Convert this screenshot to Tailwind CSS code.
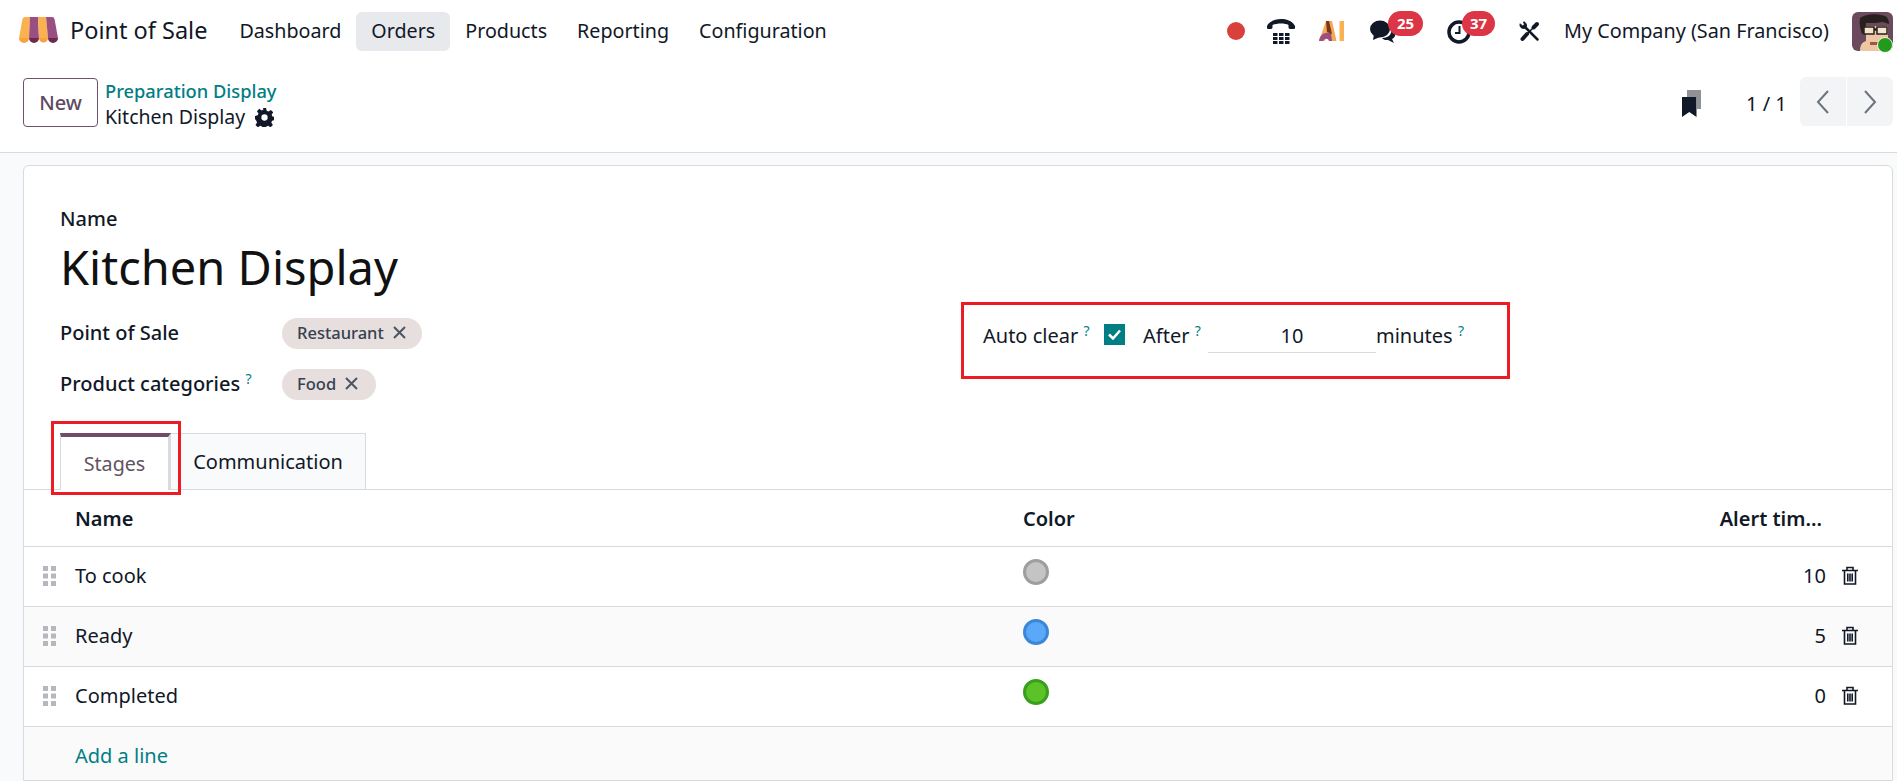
<!doctype html>
<html lang="en">
  <head>
    <meta charset="UTF-8" />
    <title>Point of Sale</title>
    <script src="https://cdn.jsdelivr.net/npm/@tailwindcss/browser@4"></script>
  </head>
  <body class="w-[1897px] h-[781px] overflow-hidden bg-[#f9fafb] text-[#111827] text-[20px] font-['Noto_Sans',sans-serif]">
    <!-- Top navbar -->
    <nav class="h-[62px] bg-white flex items-center">
      <svg class="ml-[19px] w-[39px] h-[26px] shrink-0 -mt-[2px]" viewBox="0 0 39 26">
        <path d="M3.500 2Q4 0 6 0H11L10 21H0z" fill="#fbb150"/>
        <path d="M11 0H19L20 21H10z" fill="#9a4f83"/>
        <path d="M19 0H27L29 21H20z" fill="#fbb150"/>
        <path d="M27 0H33Q35 0 35.500 2L39 21H29z" fill="#9a4f83"/>
        <path d="M0 21a5 5 0 0 0 10 0zM20 21a4.500 4.500 0 0 0 9 0z" fill="#f6a23f"/>
        <path d="M10 21a5 5 0 0 0 10 0zM29 21a5 5 0 0 0 10 0z" fill="#6d2a4c"/>
      </svg>
      <span class="ml-[12px] text-[23.500px] leading-none">Point of Sale</span>
      <div class="ml-[17px] flex items-center text-[19.700px]">
        <a class="h-[39px] px-[15px] flex items-center">Dashboard</a>
        <a class="h-[39px] px-[15px] flex items-center rounded-md bg-[#e7e9ed]">Orders</a>
        <a class="h-[39px] px-[15px] flex items-center">Products</a>
        <a class="h-[39px] px-[15px] flex items-center">Reporting</a>
        <a class="h-[39px] px-[15px] flex items-center">Configuration</a>
      </div>
      <div class="ml-auto flex items-center">
        <span class="w-[18px] h-[18px] rounded-full bg-[#d9403b]"></span>
        <!-- phone -->
        <svg class="ml-[22px] w-[28px] h-[25px]" viewBox="0 0 28 25" fill="#111827">
          <path d="M0 7C3 1.500 9 0 14 0s11 1.500 14 7c.5 1.500 0 3-1 3h-4c-1 0-1.500-.8-1.500-2V6C20 5 17 4.500 14 4.500S8 5 5.500 6V8c0 1.200-.5 2-1.500 2H1C0 10-.5 8.500 0 7z"/>
          <path d="M6 14h4.500v3H6zM12 14h4.500v3H12zM18 14h4.500v3H18zM6 18h4.500v3H6zM12 18h4.500v3H12zM18 18h4.500v3H18zM6 22h4.500v3H6zM12 22h4.500v3H12zM18 22h4.500v3H18z"/>
        </svg>
        <!-- AI mark -->
        <svg class="ml-[24px] w-[26px] h-[20px]" viewBox="0 0 26 20">
          <path d="M7 0h6l4.500 20h-5l-2-9-5 9H0z" fill="#f6a94e"/>
          <path d="M0 20C1 13 6 11 12 12l1 8h-3c-1-3-4-3-6 0z" fill="#9a4f83"/>
          <path d="M7 0h3l3 13-5-2z" fill="#7a3522"/>
          <path d="M20.500 0h4.500v20h-4.500z" fill="#fbb150"/>
        </svg>
        <!-- messages -->
        <div class="relative ml-[25px] w-[26px] h-[23px]">
          <svg class="w-[26px] h-[23px]" viewBox="0 0 26 23" fill="#111827">
            <ellipse cx="10" cy="9" rx="10" ry="8.500"/>
            <path d="M4 14l-1 6 7-3z"/>
            <path d="M21 8c3 2 5 5 4 8-.5 1.500-2 2.500-3 3l2 4-6-3c-3 .3-5-.5-6-2 5 0 11-3 9-10z"/>
          </svg>
          <span class="absolute -top-[9px] left-[18px] w-[35px] h-[25px] rounded-full bg-[#dc3545] text-white text-[15px] font-bold flex items-center justify-center">25</span>
        </div>
        <!-- activities -->
        <div class="relative ml-[51px] w-[23px] h-[23px]">
          <svg class="w-[24px] h-[24px]" viewBox="0 0 24 24" fill="none" stroke="#111827">
            <circle cx="12" cy="12" r="10" stroke-width="3.500"/>
            <path d="M12.500 6v7H8" stroke-width="2"/>
          </svg>
          <span class="absolute -top-[9px] left-[15px] w-[33px] h-[25px] rounded-full bg-[#dc3545] text-white text-[15px] font-bold flex items-center justify-center">37</span>
        </div>
        <!-- tools -->
        <svg class="ml-[49px] w-[21px] h-[21px]" viewBox="0 0 21 21" fill="none" stroke="#111827" stroke-linecap="round">
          <path d="M6 6l12.500 12.500" stroke-width="2.500"/>
          <path d="M1 3.500C.5 6 3 8.500 6.500 7 8 5.500 8 3 5.500 1L4.500 1l1 2.500-2 1.500L1.500 3z" fill="#111827" stroke-width="1"/>
          <path d="M18 3l-3.500 3.500" stroke-width="4"/>
          <path d="M14 7l-5 5" stroke-width="1.500"/>
          <path d="M8 13l-4.500 5" stroke-width="4"/>
        </svg>
        <span class="ml-[24px] leading-none text-[19.800px]">My Company (San Francisco)</span>
        <!-- avatar -->
        <div class="relative ml-[23px] mr-[4px] w-[41px] h-[39px]">
          <svg class="w-[41px] h-[39px] rounded-md" viewBox="0 0 41 39">
            <rect width="41" height="39" fill="#6b4a5e"/>
            <path d="M8 39c0-7 3-9 6-10V14h22v18c2 2 3 4 3 7z" fill="#eec7a2"/>
            <path d="M8 6c5-4 16-5 25-2 2 1 4 3 4 8l-6-2-8 1-9 0-1 10-3 1c-2-5-3-11-2-16z" fill="#27201f"/>
            <path d="M12 15h10v7H12zM25 15h10v7H25zM22 17h3v1h-3z" fill="#f3e3cf" stroke="#27201f" stroke-width="1.500"/>
            <path d="M18 30h12v3H18z" fill="#a1544a"/>
          </svg>
          <span class="absolute right-0 -bottom-[2px] w-[16px] h-[16px] rounded-full bg-[#249a1c] border border-[#eaf6e8]"></span>
        </div>
      </div>
    </nav>

    <!-- Control panel -->
    <header class="h-[91px] bg-white border-b border-[#d8dadd] flex items-start">
      <button class="ml-[23px] mt-[16px] w-[75px] h-[49px] rounded-[4px] border border-[#71506a] text-[#5d4a5e] font-medium">New</button>
      <div class="ml-[7px] mt-[16px] flex flex-col">
        <a class="h-[26px] leading-[26px] text-[#017e84] font-medium text-[18.300px]">Preparation Display</a>
        <div class="h-[26px] flex items-center text-[19.500px]">
          <span>Kitchen Display</span>
          <svg class="ml-[10px] w-[19px] h-[19px]" viewBox="0 0 24 24" fill="#111827">
            <path fill-rule="evenodd" d="M10 0h4l.7 3.400 2.300 1 3-2 3 3-2 3 1 2.300 3 .7v4l-3.400.7-1 2.300 2 3-3 3-3-2-2.300 1-.7 3.400h-4l-.7-3.400-2.300-1-3 2-3-3 2-3-1-2.300L0 14v-4l3.400-.7 1-2.300-2-3 3-3 3 2 2.300-1zM12 8a4 4 0 1 0 0 8 4 4 0 0 0 0-8z"/>
          </svg>
        </div>
      </div>
      <div class="ml-auto flex items-center mt-[15px]">
        <svg class="mt-[3px] w-[19px] h-[27px]" viewBox="0 0 19 27">
          <path d="M5 0h14v19h-4V7H5z" fill="#8f9296"/>
          <path d="M0 7h14.500v20l-7.250-5L0 27z" fill="#111827"/>
        </svg>
        <span class="ml-[45px] w-[41px] mt-[4px] whitespace-nowrap">1 / 1</span>
        <div class="ml-[13px] mr-[4px] flex h-[49px] rounded-md overflow-hidden bg-[#f3f4f6]">
          <span class="w-[47px] flex items-center justify-center border-r border-white">
            <svg class="w-[14px] h-[26px]" viewBox="0 0 14 26" fill="none" stroke="#6b7280" stroke-width="2"><path d="M12 2L2 13l10 11"/></svg>
          </span>
          <span class="w-[46px] flex items-center justify-center">
            <svg class="w-[14px] h-[26px]" viewBox="0 0 14 26" fill="none" stroke="#6b7280" stroke-width="2"><path d="M2 2l10 11L2 24"/></svg>
          </span>
        </div>
      </div>
    </header>

    <!-- Form sheet -->
    <main class="relative ml-[23px] mr-[4px] mt-[12px] h-[616px] overflow-hidden bg-white border border-[#d8dadd] rounded-t-md">
      <div class="pl-[36px] pt-[39px] pr-[40px]">
        <div class="h-[27px] leading-[27px] font-medium">Name</div>
        <h1 class="mt-[2px] h-[66px] leading-[66px] text-[47px] text-[#111] font-normal">Kitchen Display</h1>
        <div class="flex">
          <div class="w-[749px]">
            <div class="mt-[18px] h-[31px] flex items-center">
              <span class="w-[222px] -mt-[2px] font-medium">Point of Sale</span>
              <span class="h-[31px] w-[140px] rounded-full bg-[#e6dfdd] flex items-center pl-[15px] text-[16.500px] font-medium text-[#374151]">Restaurant
                <svg class="ml-[9px] w-[13px] h-[13px] -mt-[3px]" viewBox="0 0 13 13" stroke="#4b5563" stroke-width="2"><path d="M1 1l11 11M12 1L1 12"/></svg>
              </span>
            </div>
            <div class="mt-[20px] h-[31px] flex items-center">
              <span class="w-[222px] -mt-[2px] font-medium whitespace-nowrap">Product categories <sup class="text-[#017e84] text-[14px] font-normal">?</sup></span>
              <span class="h-[31px] w-[94px] rounded-full bg-[#e6dfdd] flex items-center pl-[15px] text-[16.500px] font-medium text-[#374151]">Food
                <svg class="ml-[9px] w-[13px] h-[13px] -mt-[3px]" viewBox="0 0 13 13" stroke="#4b5563" stroke-width="2"><path d="M1 1l11 11M12 1L1 12"/></svg>
              </span>
            </div>
          </div>
          <div class="ml-[174px] mt-[19px] h-[34px] flex items-center whitespace-nowrap">
            <span class="w-[121px]">Auto clear <sup class="text-[#017e84] text-[14px]">?</sup></span>
            <span class="w-[21px] h-[21px] -mt-[3px] bg-[#017e84] flex items-center justify-center">
              <svg class="w-[13px] h-[11px]" viewBox="0 0 13 11" fill="none" stroke="#fff" stroke-width="2.500"><path d="M1 5.500l4 4 7-8"/></svg>
            </span>
            <span class="ml-[18px] w-[65px]">After <sup class="text-[#017e84] text-[14px]">?</sup></span>
            <span class="w-[168px] h-[34px] border-b border-[#d8dadd] text-center leading-[34px]">10</span>
            <span>minutes <sup class="text-[#017e84] text-[14px]">?</sup></span>
          </div>
        </div>
      </div>

      <!-- Tabs -->
      <div class="mt-[33px] pl-[36px] flex h-[57px] border-b border-[#d8dadd]">
        <div class="w-[111px] h-[57px] bg-white border-t-[4px] border-t-[#714b67] border-l border-l-[#d8dadd] border-r-[3px] border-r-[#d8dadd] flex items-center justify-center text-[19.700px] text-[#5f5560]">Stages</div>
        <div class="w-[195px] h-[56px] bg-[#f9fafb] border-t border-r border-[#d8dadd] flex items-center justify-center">Communication</div>
      </div>

      <!-- Lines -->
      <div class="grid grid-cols-[51px_948px_803px_1fr] [&>div]:flex [&>div]:items-center">
        <div class="h-[57px] border-b border-[#d8dadd]"></div>
        <div class="h-[57px] pt-[1px] border-b border-[#d8dadd] font-semibold">Name</div>
        <div class="h-[57px] pt-[1px] border-b border-[#d8dadd] font-semibold justify-between"><span>Color</span><span class="mr-[4px]">Alert tim...</span></div>
        <div class="h-[57px] border-b border-[#d8dadd]"></div>

        <div class="h-[60px] pb-[2px] border-b border-[#d8dadd] pl-[19px]"><svg class="w-[13px] h-[20px]" viewBox="0 0 13 20" fill="#b4b7bb"><path d="M0 0h5v5H0zM8 0h5v5H8zM0 7.500h5v5H0zM8 7.500h5v5H8zM0 15h5v5H0zM8 15h5v5H8z"/></svg></div>
        <div class="h-[60px] pb-[2px] border-b border-[#d8dadd]">To cook</div>
        <div class="h-[60px] pb-[2px] border-b border-[#d8dadd] justify-between"><span class="w-[26px] h-[26px] -mt-[7px] rounded-full bg-[#c4c4c4] border-[3px] border-[#9e9e9e]"></span><span>10</span></div>
        <div class="h-[60px] pb-[2px] border-b border-[#d8dadd] pl-[16px]"><svg class="w-[16px] h-[19px]" viewBox="0 0 16 19" fill="none" stroke="#111827" stroke-width="1.600"><path d="M0 4.500h16M5 4V1.500h6V4M2.500 4.500V18h11V4.500M5.800 7.500v8M8 7.500v8M10.200 7.500v8"/></svg></div>

        <div class="h-[60px] pb-[2px] bg-[#fafafa] border-b border-[#d8dadd] pl-[19px]"><svg class="w-[13px] h-[20px]" viewBox="0 0 13 20" fill="#b4b7bb"><path d="M0 0h5v5H0zM8 0h5v5H8zM0 7.500h5v5H0zM8 7.500h5v5H8zM0 15h5v5H0zM8 15h5v5H8z"/></svg></div>
        <div class="h-[60px] pb-[2px] bg-[#fafafa] border-b border-[#d8dadd]">Ready</div>
        <div class="h-[60px] pb-[2px] bg-[#fafafa] border-b border-[#d8dadd] justify-between"><span class="w-[26px] h-[26px] -mt-[7px] rounded-full bg-[#5ba8f8] border-[3px] border-[#3a87d8]"></span><span>5</span></div>
        <div class="h-[60px] pb-[2px] bg-[#fafafa] border-b border-[#d8dadd] pl-[16px]"><svg class="w-[16px] h-[19px]" viewBox="0 0 16 19" fill="none" stroke="#111827" stroke-width="1.600"><path d="M0 4.500h16M5 4V1.500h6V4M2.500 4.500V18h11V4.500M5.800 7.500v8M8 7.500v8M10.200 7.500v8"/></svg></div>

        <div class="h-[60px] pb-[2px] border-b border-[#d8dadd] pl-[19px]"><svg class="w-[13px] h-[20px]" viewBox="0 0 13 20" fill="#b4b7bb"><path d="M0 0h5v5H0zM8 0h5v5H8zM0 7.500h5v5H0zM8 7.500h5v5H8zM0 15h5v5H0zM8 15h5v5H8z"/></svg></div>
        <div class="h-[60px] pb-[2px] border-b border-[#d8dadd]">Completed</div>
        <div class="h-[60px] pb-[2px] border-b border-[#d8dadd] justify-between"><span class="w-[26px] h-[26px] -mt-[7px] rounded-full bg-[#5cc22a] border-[3px] border-[#37a01a]"></span><span>0</span></div>
        <div class="h-[60px] pb-[2px] border-b border-[#d8dadd] pl-[16px]"><svg class="w-[16px] h-[19px]" viewBox="0 0 16 19" fill="none" stroke="#111827" stroke-width="1.600"><path d="M0 4.500h16M5 4V1.500h6V4M2.500 4.500V18h11V4.500M5.800 7.500v8M8 7.500v8M10.200 7.500v8"/></svg></div>

        <div class="h-[53px] pt-[4px] bg-[#fafafa] col-span-4 pl-[51px] text-[#017e84]">Add a line</div>
      </div>

      <!-- Annotation boxes drawn over the form -->
      <div class="absolute left-[27px] top-[255px] w-[130px] h-[74px] border-[3px] border-[#ed1c24]"></div>
      <div class="absolute left-[937px] top-[136px] w-[549px] h-[77px] border-[3px] border-[#ed1c24]"></div>
    </main>
  </body>
</html>
